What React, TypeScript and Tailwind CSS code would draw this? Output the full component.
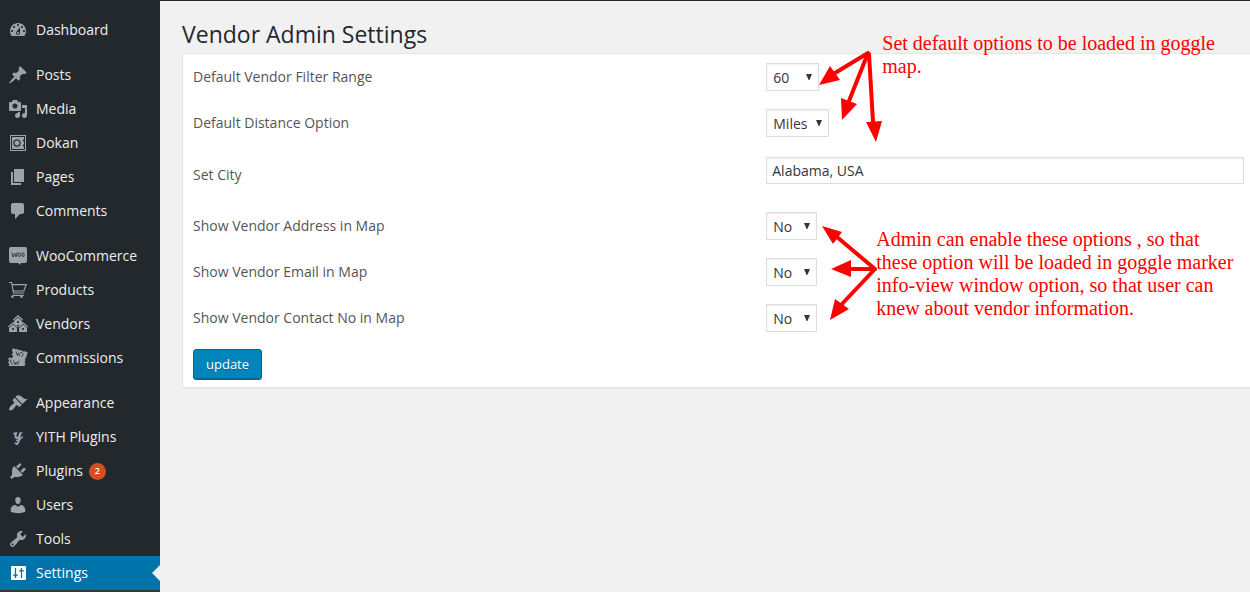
import type { ReactNode } from "react";

type IconProps = { children: ReactNode };

function Icon({ children }: IconProps) {
  return (
    <svg viewBox="0 0 20 20" className="size-5 shrink-0" fill="currentColor" aria-hidden="true">
      {children}
    </svg>
  );
}

const hut = (x: number, y: number) => (
  <g key={`${x}-${y}`} transform={`translate(${x} ${y})`}>
    <path d="M0 4.6 5 0l5 4.6-.8.9L5 1.8.8 5.5z" />
    <path fillRule="evenodd" d="M1 6 5 2.500 9 6v4H1zM4.200 6v2h1.600V6z" />
  </g>
);

const icons: Record<string, ReactNode> = {
  dashboard: (
    <path d="M3.76 16h12.48c1.1-1.37 1.76-3.11 1.76-5 0-4.42-3.58-8-8-8s-8 3.58-8 8c0 1.89.66 3.63 1.76 5zM10 4c.55 0 1 .45 1 1s-.45 1-1 1-1-.45-1-1 .45-1 1-1zM6 6c.55 0 1 .45 1 1s-.45 1-1 1-1-.45-1-1 .45-1 1-1zm8 0c.55 0 1 .45 1 1s-.45 1-1 1-1-.45-1-1 .45-1 1-1zm-5.37 5.55L12 7v6c0 1.1-.9 2-2 2s-2-.9-2-2c0-.57.24-1.08.63-1.45zM4 10c.55 0 1 .45 1 1s-.45 1-1 1-1-.45-1-1 .45-1 1-1zm12 0c.55 0 1 .45 1 1s-.45 1-1 1-1-.45-1-1 .45-1 1-1zm-5 3c0-.55-.45-1-1-1s-1 .45-1 1 .45 1 1 1 1-.45 1-1z" fillRule="evenodd" />
  ),
  posts: (
    <path d="M10.44 3.02l1.82-1.82 6.36 6.35-1.83 1.82c-1.05-.68-2.48-.57-3.41.36l-.75.75c-.92.93-1.04 2.35-.35 3.41l-1.83 1.82-2.41-2.41-2.8 2.79c-.42.42-3.38 2.71-3.8 2.29s1.86-3.39 2.28-3.81l2.79-2.79L4.1 9.36l1.83-1.82c1.05.69 2.48.57 3.4-.36l.75-.75c.93-.92 1.05-2.35.36-3.41z" />
  ),
  media: (
    <path fillRule="evenodd" d="M13 11V4c0-.55-.45-1-1-1h-1.67L9 1H5L3.67 3H2c-.55 0-1 .45-1 1v7c0 .55.45 1 1 1h10c.55 0 1-.45 1-1zM7 4.5c1.38 0 2.5 1.12 2.5 2.5S8.38 9.5 7 9.5 4.5 8.38 4.5 7 5.62 4.5 7 4.5zM14 6h5v10.5c0 1.38-1.12 2.5-2.5 2.5S14 17.88 14 16.5s1.12-2.5 2.5-2.5c.17 0 .34.02.5.05V9h-3V6zm-4 8.05V13h2v3.5c0 1.38-1.12 2.5-2.5 2.5S7 17.88 7 16.5 8.12 14 9.5 14c.17 0 .34.02.5.05z" />
  ),
  dokan: (
    <>
      <path fillRule="evenodd" d="M2 2h16v16H2zm1 1v14h14V3z" />
      <path fillRule="evenodd" d="M4 4h12v2.500h-1v2h1v3h-1v2h1V16H4zm5 2.200a3.800 3.800 0 1 0 .01 0z" />
      <path fillRule="evenodd" d="M9 7.400a2.600 2.600 0 1 0 .01 0z" />
    </>
  ),
  pages: <path d="M6 15V2h10v13H6zm-1 1h8v2H3V5h2v11z" />,
  comments: (
    <path d="M5 2h9c1.100 0 2 .9 2 2v7c0 1.100-.9 2-2 2h-2l-5 5v-5H5c-1.100 0-2-.9-2-2V4c0-1.100.9-2 2-2z" />
  ),
  woo: (
    <>
      <path d="M3 1h14a2 2 0 0 1 2 2v12a2 2 0 0 1-2 2h-4.500l.3 2-3-2H3a2 2 0 0 1-2-2V3a2 2 0 0 1 2-2z" />
      <g fill="none" stroke="#23282d" strokeWidth=".8">
        <path d="M3.800 6.500 5 11l1.700-3.700L8 11l1-4.500" />
        <ellipse cx="11.200" cy="8.700" rx="1.200" ry="1.900" />
        <ellipse cx="15" cy="8.700" rx="1.200" ry="1.900" />
      </g>
    </>
  ),
  products: (
    <>
      <path fill="none" stroke="currentColor" strokeWidth="1.200" d="M1 2.500h2.700L5.500 13h10.700M4.200 4.600h14L15.800 11H5.300M4.300 15.300h11.500" />
      <circle cx="4.500" cy="16.800" r="1.300" />
      <circle cx="13.500" cy="16.800" r="1.300" />
    </>
  ),
  vendors: <>{[hut(5, 1), hut(0, 8), hut(10, 8)]}</>,
  commissions: (
    <>
      <path d="m5 0 2 1.200L9 1l2 1.300 2-.3 2 1.400 2-.2 3 1.500-1.400 2 .4 1.600-1.400 1.300.2 1.700H4L5 8 3.600 6.500 5 4.500 4 2.500z" />
      <path d="m0 10.500 2-.9 2 .5 2-.9 3 .3 2-.8 3 .6 3-.6-.6 2 .9 1.800-.8 1.600 1 2-1.200 2H.6L1.500 16 0 14.500 1.200 12.500z" />
      <g fill="none" stroke="#23282d" strokeWidth=".8">
        <path d="m8 3.500 1.500 4 1-2.500 1.300 3M12 4.500a2 2 0 1 1 1.500 4M5.500 12.500l1.500 4 1.200-2.500 1.300 2.500 1.500-4M3 11.500c-1 2 0 4 2 5" />
      </g>
    </>
  ),
  appearance: (
    <path d="M14.480 11.060L7.410 3.990l1.500-1.500c.5-.56 2.300-.47 3.510.32 1.210.8 1.430 1.280 2.910 2.100 1.180.64 2.450 1.260 4.450.85zm-.71.71L6.700 4.700 4.930 6.470c-.39.39-.39 1.020 0 1.410l1.060 1.060c.39.39.39 1.030 0 1.420-.6.6-1.430 1.110-2.210 1.690-.35.26-.7.53-1.010.84C1.430 14.230.4 16.080 1.400 17.070c.99 1 2.840-.03 4.180-1.360.31-.31.58-.66.85-1.020.57-.78 1.080-1.610 1.690-2.210.39-.39 1.020-.39 1.410 0l1.060 1.060c.39.39 1.020.39 1.410 0z" />
  ),
  yith: (
    <>
      <circle cx="10" cy="10.500" r="7.500" fill="#1d2c3b" />
      <path fill="none" stroke="currentColor" strokeWidth="2" d="M5.500 6.800 8 6.300c-.8 3-.7 4.700.8 4.700 1.800 0 3-2.500 3.400-5.200-.3 4.500-.9 8-2.300 10.300-.9 1.200-2.400 1-2.600-.6" />
      <path fill="none" stroke="currentColor" strokeWidth="1.300" d="M8 13.500c3-.5 5.500-1.700 6.800-4M12 5.800h2.500" />
    </>
  ),
  plugins: (
    <path d="M13.110 4.360L9.870 7.600 8 5.730l3.240-3.240c.35-.34 1.050-.2 1.560.32.52.51.66 1.210.31 1.550zm-8 1.770l.91-1.120 9.010 9.010-1.190.84c-.71.71-2.630 1.160-3.820 1.160H6.140L4.900 17.260c-.59.59-1.540.59-2.120 0-.59-.58-.59-1.530 0-2.120l1.240-1.240v-3.880c0-1.130.4-3.190 1.090-3.890zm7.260 3.970l3.240-3.240c.34-.35 1.040-.21 1.550.31.52.51.66 1.210.31 1.550l-3.240 3.250z" />
  ),
  users: (
    <path d="M10 9.250c-2.270 0-2.730-3.440-2.730-3.440C7 4.020 7.820 2 9.970 2c2.160 0 2.980 2.020 2.710 3.810 0 0-.41 3.440-2.680 3.440zm0 2.570L12.720 10c2.390 0 4.520 2.330 4.520 4.530v2.490s-3.650 1.130-7.240 1.130c-3.650 0-7.240-1.130-7.240-1.130v-2.490c0-2.250 1.940-4.480 4.470-4.480z" />
  ),
  tools: (
    <path fillRule="evenodd" d="M16.680 9.770c-1.340 1.340-3.300 1.670-4.950.99l-5.410 6.520c-.99.99-2.590.99-3.580 0s-.99-2.590 0-3.570l6.520-5.420c-.68-1.650-.35-3.610.99-4.950 1.280-1.280 3.120-1.620 4.720-1.060l-2.890 2.890 2.820 2.820 2.860-2.870c.53 1.580.18 3.390-1.080 4.650zM3.810 16.210c.4.39 1.040.39 1.430 0 .4-.4.4-1.040 0-1.430-.39-.4-1.030-.4-1.430 0-.39.39-.39 1.030 0 1.430z" />
  ),
  settings: (
    <>
      <rect x="3" y="3" width="15" height="14" rx="1" />
      <g stroke="#0073aa" fill="none">
        <path strokeWidth="1.200" d="M7.500 5v10M13.500 5v10" />
        <path strokeWidth="1.200" d="M5 12h5M11 8h5" />
      </g>
      <path fill="#0073aa" d="m5.500 12 2 2 2-2zM11.500 8l2-2 2 2z" />
    </>
  ),
};

type MenuItem = { label: string; icon: string; count?: number; current?: boolean };

const menu: MenuItem[][] = [
  [{ label: "Dashboard", icon: "dashboard" }],
  [
    { label: "Posts", icon: "posts" },
    { label: "Media", icon: "media" },
    { label: "Dokan", icon: "dokan" },
    { label: "Pages", icon: "pages" },
    { label: "Comments", icon: "comments" },
  ],
  [
    { label: "WooCommerce", icon: "woo" },
    { label: "Products", icon: "products" },
    { label: "Vendors", icon: "vendors" },
    { label: "Commissions", icon: "commissions" },
  ],
  [
    { label: "Appearance", icon: "appearance" },
    { label: "YITH Plugins", icon: "yith" },
    { label: "Plugins", icon: "plugins", count: 2 },
    { label: "Users", icon: "users" },
    { label: "Tools", icon: "tools" },
    { label: "Settings", icon: "settings", current: true },
  ],
];

function Sidebar() {
  return (
    <nav aria-label="Main menu" className="flex w-40 shrink-0 flex-col gap-[11px] bg-[#23282d] pt-3">
      {menu.map((group) => (
        <ul key={group[0].label}>
          {group.map((item) => (
            <li key={item.label}>
              <a
                href="#"
                aria-current={item.current ? "page" : undefined}
                className={
                  item.current
                    ? "relative flex h-[34px] items-center gap-2 bg-[#0073aa] pl-2 text-white"
                    : "flex h-[34px] items-center gap-2 pl-2 text-[#eeeeee]"
                }
              >
                <span className={item.current ? "text-white" : "text-[#9ea3a8]"}>
                  <Icon>{icons[item.icon]}</Icon>
                </span>
                {item.label}
                {item.count && (
                  <span className="-ml-0.5 flex size-[17px] items-center justify-center rounded-full bg-[#d54e21] text-[9px] font-semibold text-white">
                    {item.count}
                  </span>
                )}
                {item.current && (
                  <span className="absolute right-0 border-y-8 border-r-8 border-y-transparent border-r-[#f1f1f1]" />
                )}
              </a>
            </li>
          ))}
        </ul>
      ))}
      <div className="-mt-[11px] grow bg-[#32373c]" />
    </nav>
  );
}

type RowProps = { id: string; label: string; children: ReactNode; tall?: boolean };

function Row({ id, label, children, tall }: RowProps) {
  return (
    <div
      className={
        tall
          ? "grid h-[57px] grid-cols-[6fr_5fr] items-center"
          : "grid h-[46px] grid-cols-[6fr_5fr] items-center"
      }
    >
      <label htmlFor={id} className="text-[#555555]">
        {label}
      </label>
      <div className={tall ? "flex pb-2" : "flex"}>{children}</div>
    </div>
  );
}

type DropDownProps = { id: string; options: string[]; width: string };

function DropDown({ id, options, width }: DropDownProps) {
  return (
    <div className="relative flex items-center">
      <select
        id={id}
        className={`${width} h-7 appearance-none border border-[#dddddd] bg-white pt-0.5 pl-1.5 text-[#32373c] shadow-[inset_0_1px_2px_rgba(0,0,0,0.07)]`}
      >
        {options.map((option) => (
          <option key={option}>{option}</option>
        ))}
      </select>
      <svg
        viewBox="0 0 6 6"
        className="pointer-events-none absolute right-[7px] size-1.5"
        fill="#32373c"
        aria-hidden="true"
      >
        <path d="M0 0h6L3.400 6h-.8z" />
      </svg>
    </div>
  );
}

function Annotations() {
  return (
    <div className="pointer-events-none absolute inset-0 grid grid-cols-[6fr_5fr] pr-1.5 pl-2.5 font-['Liberation_Serif',serif] text-xl leading-[23px] text-[#ff0000]">
      <div className="relative col-start-2">
        <svg
          viewBox="0 0 120 280"
          className="absolute top-0 left-0 h-[280px] w-[120px] overflow-visible"
          fill="#ff0000"
          stroke="#ff0000"
          aria-hidden="true"
        >
          <g fill="none" strokeWidth="4" strokeLinecap="round">
            <path d="M102-1 69 19M102-1 83 47M103 0l4 68" />
            <path d="m109 215-38-32M109 215H84M109 215l-34 36" />
          </g>
          <g stroke="none">
            <path d="m53 31 11-19 10 14zM76 66l-1-22 16 6zM110 88l-10-20 16-1z" />
            <path d="m56 172 20 6-9 12zM65 215l20-9v17zM64 266l5-21 14 10z" />
          </g>
        </svg>
        <p className="absolute -top-[22px] left-[116px] w-[362px]">
          Set default options to be loaded in goggle map.
        </p>
        <p className="absolute top-[174px] left-[110px] w-[362px]">
          Admin can enable these options , so that these option will be loaded in goggle marker
          info-view window option, so that user can knew about vendor information.
        </p>
      </div>
    </div>
  );
}

export default function App() {
  return (
    <div className="flex min-h-screen flex-col border-t border-[#23282d] bg-[#f1f1f1] font-['Open_Sans',sans-serif] text-sm">
      <div className="flex grow">
        <Sidebar />
        <main className="min-w-0 grow pt-[17px] pl-[22px]">
          <h1 className="pb-0.5 text-[23px] leading-[33px] text-[#23282d]">Vendor Admin Settings</h1>
          <form
            className="relative border border-r-0 border-[#e5e5e5] bg-white pr-1.5 pb-[7px] pl-2.5 shadow-[0_1px_1px_rgba(0,0,0,0.04)]"
            onSubmit={(event) => event.preventDefault()}
          >
            <Row id="range" label="Default Vendor Filter Range">
              <DropDown id="range" options={["60", "30", "90"]} width="w-[53px]" />
            </Row>
            <Row id="distance" label="Default Distance Option">
              <DropDown id="distance" options={["Miles", "Km"]} width="w-[63px]" />
            </Row>
            <Row id="city" label="Set City" tall>
              <input
                id="city"
                type="text"
                defaultValue="Alabama, USA"
                className="h-[27px] w-full border border-[#dddddd] bg-white px-[5px] text-[#32373c] shadow-[inset_0_1px_2px_rgba(0,0,0,0.07)]"
              />
            </Row>
            <Row id="address" label="Show Vendor Address in Map">
              <DropDown id="address" options={["No", "Yes"]} width="w-[51px]" />
            </Row>
            <Row id="email" label="Show Vendor Email in Map">
              <DropDown id="email" options={["No", "Yes"]} width="w-[51px]" />
            </Row>
            <Row id="contact" label="Show Vendor Contact No in Map">
              <DropDown id="contact" options={["No", "Yes"]} width="w-[51px]" />
            </Row>
            <button
              type="submit"
              className="mt-2 block h-[31px] rounded-[3px] border border-[#006799] bg-[#0085ba] px-3 text-[13px] text-white shadow-[inset_0_-1px_0_#006799] [text-shadow:0_1px_1px_#006799]"
            >
              update
            </button>
            <Annotations />
          </form>
        </main>
      </div>
    </div>
  );
}
